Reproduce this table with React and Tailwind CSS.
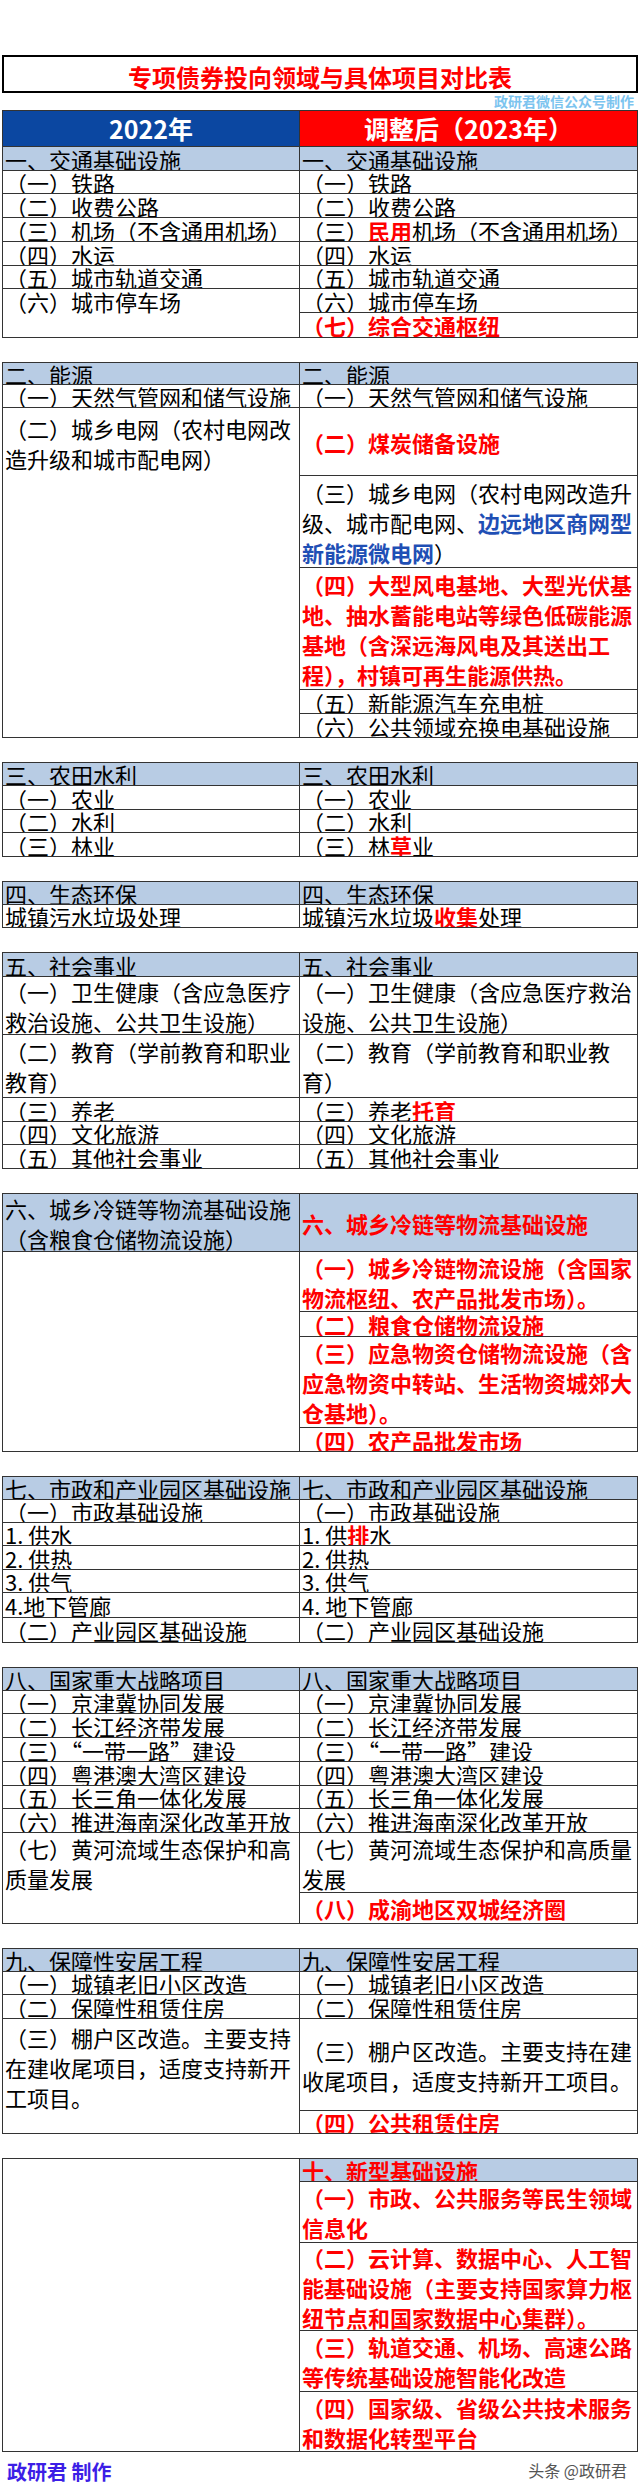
import clsx from 'clsx';

const FONT = "font-['Noto_Sans_CJK_SC',sans-serif]";

// red / blue highlighted runs inside a cell
const R = ({ children }) => <span className="font-bold text-[#ff0000]">{children}</span>;
const B = ({ children }) => <span className="font-bold text-[#1f4fb5]">{children}</span>;
// full-width curly quotes, as the source sheet shows them
const Q = ({ children }) => <span className="[font-feature-settings:'fwid']">{children}</span>;

/**
 * One cell of the comparison table. h = full height class (includes bottom rule)
 */
function Cell({ h, sec, multi, top, pt, children }) {
  return (
    <div
      className={clsx(
        'flex overflow-hidden border-b border-[#333] px-[2px] text-[22px] text-black',
        h,
        sec ? 'bg-[#b8cce4]' : 'bg-white',
        top ? 'items-start' : 'items-center',
        multi ? 'leading-[30px]' : 'leading-[24px]',
        pt
      )}
    >
      <div className="w-full">{children}</div>
    </div>
  );
}

function Block({ left, right }) {
  return (
    <div className="border-x border-t border-[#333]">
      <div className="grid grid-cols-[297px_1fr]">
        <div className="flex flex-col border-r border-[#333]">{left}</div>
        <div className="flex flex-col">{right}</div>
      </div>
    </div>
  );
}

export default function App() {
  return (
    <div className={clsx('min-h-[2489px] bg-white px-[2px] pt-[55px]', FONT)}>
      {/* title */}
      <div className="flex h-[38px] items-center justify-center border-2 border-black pt-[5px]">
        <h1 className="text-[24px] font-bold leading-[28px] text-[#ff0000]">专项债券投向领域与具体项目对比表</h1>
      </div>
      <div className="h-[17px] pr-[4px] text-right text-[14px] font-bold leading-[17px] text-[#7cc4ef]">
        政研君微信公众号制作
      </div>

      <div className="flex flex-col gap-6">
        {/* 一 */}
        <Block
          left={
            <>
              <div className="flex h-[36px] items-center justify-center border-b border-[#333] bg-[#0b47a1] text-[25px] font-bold text-white">
                2022年
              </div>
              <Cell h="h-[24px]" sec>一、交通基础设施</Cell>
              <Cell h="h-[23px]">（一）铁路</Cell>
              <Cell h="h-[24px]">（二）收费公路</Cell>
              <Cell h="h-[24px]">（三）机场（不含通用机场）</Cell>
              <Cell h="h-[24px]">（四）水运</Cell>
              <Cell h="h-[23px]">（五）城市轨道交通</Cell>
              <Cell h="h-[49px]" top>（六）城市停车场</Cell>
            </>
          }
          right={
            <>
              <div className="flex h-[36px] items-center justify-center border-b border-[#333] bg-[#ff0000] text-[25px] font-bold text-white">
                调整后（2023年）
              </div>
              <Cell h="h-[24px]" sec>一、交通基础设施</Cell>
              <Cell h="h-[23px]">（一）铁路</Cell>
              <Cell h="h-[24px]">（二）收费公路</Cell>
              <Cell h="h-[24px]">（三）<R>民用</R>机场（不含通用机场）</Cell>
              <Cell h="h-[24px]">（四）水运</Cell>
              <Cell h="h-[23px]">（五）城市轨道交通</Cell>
              <Cell h="h-[24px]">（六）城市停车场</Cell>
              <Cell h="h-[25px]"><R>（七）综合交通枢纽</R></Cell>
            </>
          }
        />

        {/* 二 */}
        <Block
          left={
            <>
              <Cell h="h-[22px]" sec>二、能源</Cell>
              <Cell h="h-[23px]">（一）天然气管网和储气设施</Cell>
              <Cell h="h-[330px]" multi top pt="pt-[5px]">（二）城乡电网（农村电网改造升级和城市配电网）</Cell>
            </>
          }
          right={
            <>
              <Cell h="h-[22px]" sec>二、能源</Cell>
              <Cell h="h-[23px]">（一）天然气管网和储气设施</Cell>
              <Cell h="h-[68px]"><R>（二）煤炭储备设施</R></Cell>
              <Cell h="h-[92px]" multi>
                （三）城乡电网（农村电网改造升级、城市配电网、<B>边远地区商网型新能源微电网</B>）
              </Cell>
              <Cell h="h-[122px]" multi>
                <R>（四）大型风电基地、大型光伏基地、抽水蓄能电站等绿色低碳能源基地（含深远海风电及其送出工程），村镇可再生能源供热。</R>
              </Cell>
              <Cell h="h-[24px]">（五）新能源汽车充电桩</Cell>
              <Cell h="h-[24px]">（六）公共领域充换电基础设施</Cell>
            </>
          }
        />

        {/* 三 */}
        <Block
          left={
            <>
              <Cell h="h-[23px]" sec>三、农田水利</Cell>
              <Cell h="h-[24px]">（一）农业</Cell>
              <Cell h="h-[23px]">（二）水利</Cell>
              <Cell h="h-[24px]">（三）林业</Cell>
            </>
          }
          right={
            <>
              <Cell h="h-[23px]" sec>三、农田水利</Cell>
              <Cell h="h-[24px]">（一）农业</Cell>
              <Cell h="h-[23px]">（二）水利</Cell>
              <Cell h="h-[24px]">（三）林<R>草</R>业</Cell>
            </>
          }
        />

        {/* 四 */}
        <Block
          left={
            <>
              <Cell h="h-[23px]" sec>四、生态环保</Cell>
              <Cell h="h-[23px]">城镇污水垃圾处理</Cell>
            </>
          }
          right={
            <>
              <Cell h="h-[23px]" sec>四、生态环保</Cell>
              <Cell h="h-[23px]">城镇污水垃圾<R>收集</R>处理</Cell>
            </>
          }
        />

        {/* 五 */}
        <Block
          left={
            <>
              <Cell h="h-[24px]" sec>五、社会事业</Cell>
              <Cell h="h-[58px]" multi>（一）卫生健康（含应急医疗救治设施、公共卫生设施）</Cell>
              <Cell h="h-[63px]" multi>（二）教育（学前教育和职业教育）</Cell>
              <Cell h="h-[24px]">（三）养老</Cell>
              <Cell h="h-[23px]">（四）文化旅游</Cell>
              <Cell h="h-[24px]">（五）其他社会事业</Cell>
            </>
          }
          right={
            <>
              <Cell h="h-[24px]" sec>五、社会事业</Cell>
              <Cell h="h-[58px]" multi>（一）卫生健康（含应急医疗救治设施、公共卫生设施）</Cell>
              <Cell h="h-[63px]" multi>（二）教育（学前教育和职业教育）</Cell>
              <Cell h="h-[24px]">（三）养老<R>托育</R></Cell>
              <Cell h="h-[23px]">（四）文化旅游</Cell>
              <Cell h="h-[24px]">（五）其他社会事业</Cell>
            </>
          }
        />

        {/* 六 */}
        <Block
          left={
            <>
              <Cell h="h-[58px]" sec multi>六、城乡冷链等物流基础设施（含粮食仓储物流设施）</Cell>
              <Cell h="h-[200px]" />
            </>
          }
          right={
            <>
              <Cell h="h-[58px]" sec><R>六、城乡冷链等物流基础设施</R></Cell>
              <Cell h="h-[60px]" multi>
                <R>（一）城乡冷链物流设施（含国家物流枢纽、农产品批发市场）。</R>
              </Cell>
              <Cell h="h-[25px]"><R>（二）粮食仓储物流设施</R></Cell>
              <Cell h="h-[91px]" multi>
                <R>（三）应急物资仓储物流设施（含应急物资中转站、生活物资城郊大仓基地）。</R>
              </Cell>
              <Cell h="h-[24px]"><R>（四）农产品批发市场</R></Cell>
            </>
          }
        />

        {/* 七 */}
        <Block
          left={
            <>
              <Cell h="h-[23px]" sec>七、市政和产业园区基础设施</Cell>
              <Cell h="h-[23px]">（一）市政基础设施</Cell>
              <Cell h="h-[23px]">1. 供水</Cell>
              <Cell h="h-[24px]">2. 供热</Cell>
              <Cell h="h-[23px]">3. 供气</Cell>
              <Cell h="h-[25px]">4.地下管廊</Cell>
              <Cell h="h-[25px]">（二）产业园区基础设施</Cell>
            </>
          }
          right={
            <>
              <Cell h="h-[23px]" sec>七、市政和产业园区基础设施</Cell>
              <Cell h="h-[23px]">（一）市政基础设施</Cell>
              <Cell h="h-[23px]">1. 供<R>排</R>水</Cell>
              <Cell h="h-[24px]">2. 供热</Cell>
              <Cell h="h-[23px]">3. 供气</Cell>
              <Cell h="h-[25px]">4. 地下管廊</Cell>
              <Cell h="h-[25px]">（二）产业园区基础设施</Cell>
            </>
          }
        />

        {/* 八 */}
        <Block
          left={
            <>
              <Cell h="h-[23px]" sec>八、国家重大战略项目</Cell>
              <Cell h="h-[23px]">（一）京津冀协同发展</Cell>
              <Cell h="h-[24px]">（二）长江经济带发展</Cell>
              <Cell h="h-[24px]">（三）<Q>“一带一路”</Q>建设</Cell>
              <Cell h="h-[24px]">（四）粤港澳大湾区建设</Cell>
              <Cell h="h-[23px]">（五）长三角一体化发展</Cell>
              <Cell h="h-[24px]">（六）推进海南深化改革开放</Cell>
              <Cell h="h-[91px]" multi top>（七）黄河流域生态保护和高质量发展</Cell>
            </>
          }
          right={
            <>
              <Cell h="h-[23px]" sec>八、国家重大战略项目</Cell>
              <Cell h="h-[23px]">（一）京津冀协同发展</Cell>
              <Cell h="h-[24px]">（二）长江经济带发展</Cell>
              <Cell h="h-[24px]">（三）<Q>“一带一路”</Q>建设</Cell>
              <Cell h="h-[24px]">（四）粤港澳大湾区建设</Cell>
              <Cell h="h-[23px]">（五）长三角一体化发展</Cell>
              <Cell h="h-[24px]">（六）推进海南深化改革开放</Cell>
              <Cell h="h-[60px]" multi>（七）黄河流域生态保护和高质量发展</Cell>
              <Cell h="h-[31px]"><R>（八）成渝地区双城经济圈</R></Cell>
            </>
          }
        />

        {/* 九 */}
        <Block
          left={
            <>
              <Cell h="h-[23px]" sec>九、保障性安居工程</Cell>
              <Cell h="h-[23px]">（一）城镇老旧小区改造</Cell>
              <Cell h="h-[24px]">（二）保障性租赁住房</Cell>
              <Cell h="h-[115px]" multi top pt="pt-[3px]">（三）棚户区改造。主要支持在建收尾项目，适度支持新开工项目。</Cell>
            </>
          }
          right={
            <>
              <Cell h="h-[23px]" sec>九、保障性安居工程</Cell>
              <Cell h="h-[23px]">（一）城镇老旧小区改造</Cell>
              <Cell h="h-[24px]">（二）保障性租赁住房</Cell>
              <Cell h="h-[92px]" multi>（三）棚户区改造。主要支持在建收尾项目，适度支持新开工项目。</Cell>
              <Cell h="h-[23px]"><R>（四）公共租赁住房</R></Cell>
            </>
          }
        />

        {/* 十 */}
        <Block
          left={<Cell h="h-[293px]" />}
          right={
            <>
              <Cell h="h-[23px]" sec><R>十、新型基础设施</R></Cell>
              <Cell h="h-[61px]" multi><R>（一）市政、公共服务等民生领域信息化</R></Cell>
              <Cell h="h-[88px]" multi>
                <R>（二）云计算、数据中心、人工智能基础设施（主要支持国家算力枢纽节点和国家数据中心集群）。</R>
              </Cell>
              <Cell h="h-[61px]" multi><R>（三）轨道交通、机场、高速公路等传统基础设施智能化改造</R></Cell>
              <Cell h="h-[60px]" multi><R>（四）国家级、省级公共技术服务和数据化转型平台</R></Cell>
            </>
          }
        />
      </div>

      {/* footer */}
      <div className="flex items-start justify-between px-[5px] pt-[8px]">
        <span className="text-[20px] font-bold leading-[24px] text-[#3c1ee6]">政研君 制作</span>
        <span className="pr-[6px] text-[16px] leading-[20px] text-[#555]">头条 @政研君</span>
      </div>
    </div>
  );
}
